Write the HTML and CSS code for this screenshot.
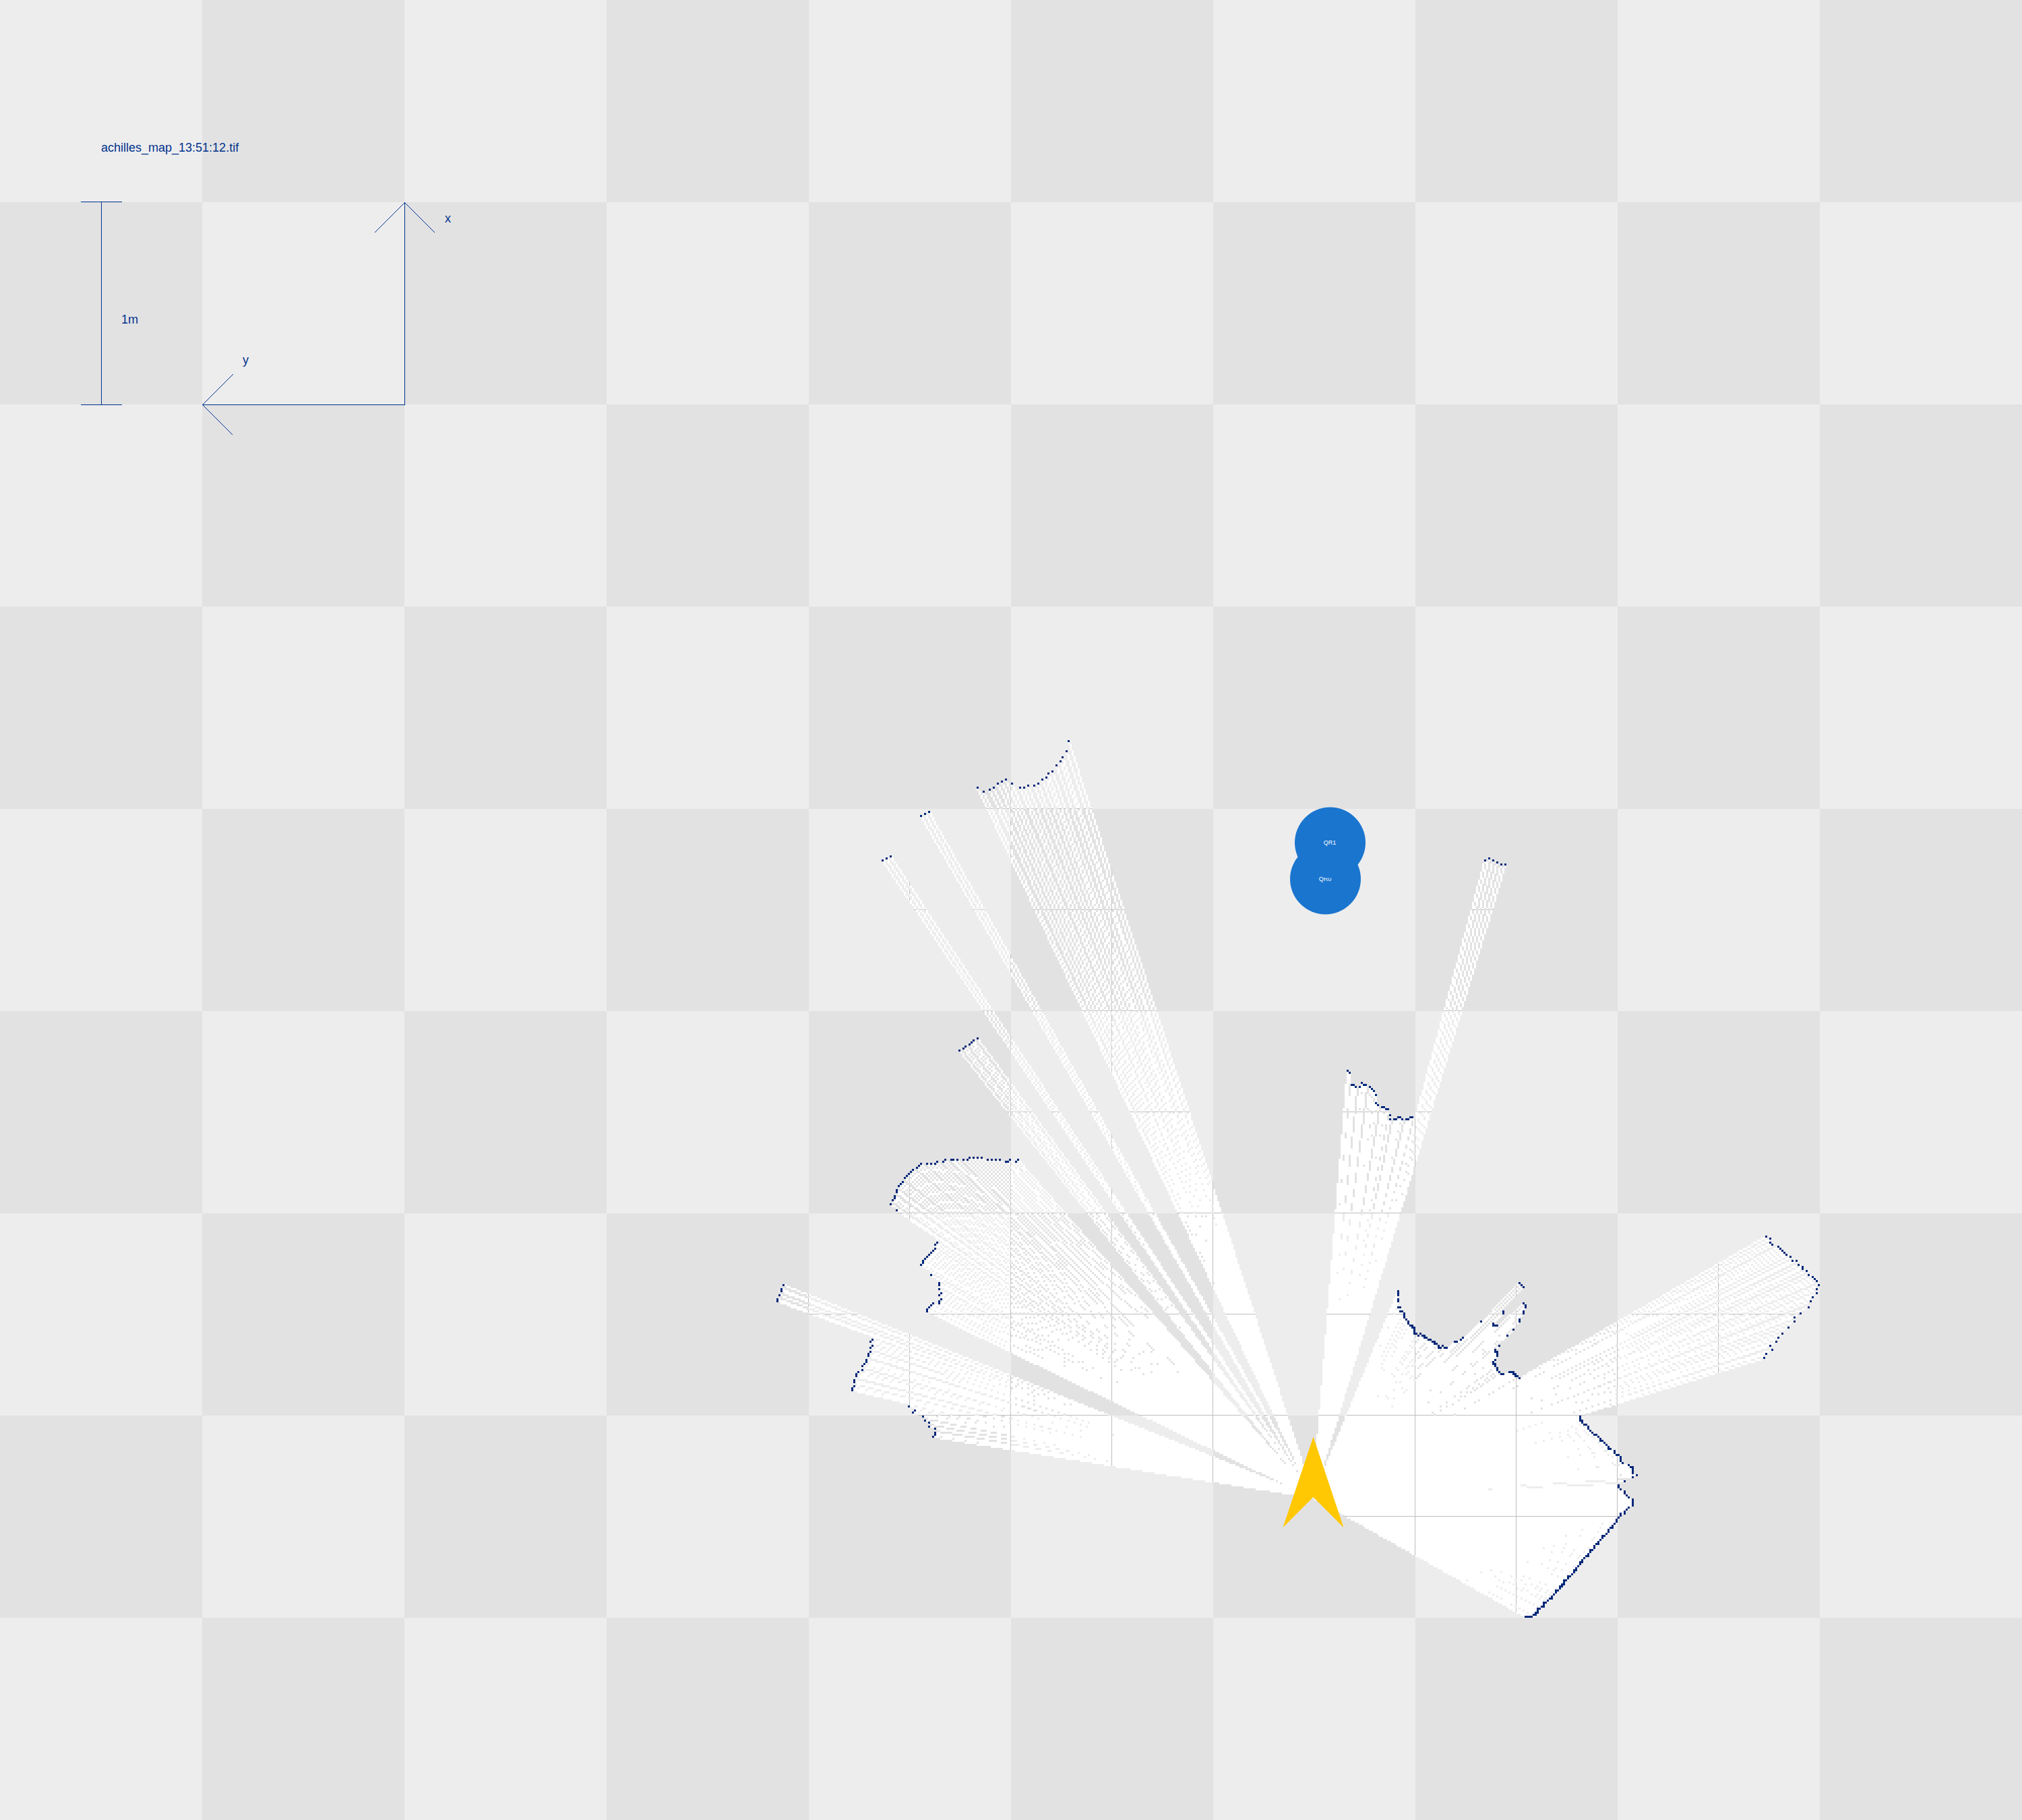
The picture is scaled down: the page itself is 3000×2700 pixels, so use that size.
FILE: index.html
```html
<!DOCTYPE html>
<html lang="en">
<head>
<meta charset="utf-8">
<title>achilles_map_13:51:12.tif</title>
<link rel="stylesheet" href="styles.css">
</head>
<body>
<main class="map">
<svg class="sheet" viewBox="0 0 3000 2700" role="img" aria-label="Occupancy grid map">
  <defs>
    <pattern id="checker" width="600" height="600" patternUnits="userSpaceOnUse">
      <rect class="tile-light" width="600" height="600"/>
      <path class="tile-dark" d="M300 0h300v300h-300zM0 300h300v300h-300z"/>
    </pattern>
  </defs>
  <rect class="crisp" width="3000" height="2700" fill="url(#checker)"/>

  <path id="free" class="free crisp"/>
  <path id="grid" class="grid crisp"/>
  <path id="walls" class="walls crisp"/>

  <g class="scale crisp">
    <path d="M120 299h61v1h-61zM120 600h61v1h-61zM150 300h1v300h-1z"/>
    <path d="M600 300h1v301h-1zM300 600h301v1h-301z"/>
  </g>
  <g class="heads crisp">
    <path d="M555.500 345.500L600.500 300.500L645.500 345.500"/>
    <path d="M345.500 555.500L300.500 600.500L345.500 645.500"/>
  </g>
  <g class="labels">
    <text x="150" y="225">achilles_map_13:51:12.tif</text>
    <text x="180" y="480">1m</text>
    <text x="660" y="330">x</text>
    <text x="360" y="540">y</text>
  </g>

  <g class="marker">
    <circle cx="1966.500" cy="1304" r="52.500"/>
    <text x="1966" y="1307">QR0</text>
  </g>
  <g class="marker">
    <circle cx="1973.500" cy="1250" r="52.500"/>
    <text x="1973" y="1253">QR1</text>
  </g>

  <path class="robot" d="M1948.500 2131.500L1993.500 2266L1948.500 2221L1903.500 2266Z"/>
</svg>
</main>
<script src="map.js"></script>
</body>
</html>
```
FILE: styles.css
```css
body {
  margin: 0;
  background: #ededee;
}

.map {
  display: grid;
}

.sheet {
  display: block;
  width: 100%;
  height: auto;
}

.crisp {
  shape-rendering: crispEdges;
}

.tile-light {
  fill: #ededee;
}

.tile-dark {
  fill: #e2e2e3;
}

.free {
  fill: #ffffff;
}

.grid {
  fill: #bebebf;
}

.walls {
  fill: #002878;
}

.scale {
  fill: #00328c;
}

.heads {
  fill: none;
  stroke: #00328c;
  stroke-width: 1px;
}

.labels {
  fill: #00328c;
  font: 18px "Liberation Sans", Arial, sans-serif;
}

.marker circle {
  fill: #1a75cf;
}

.marker text {
  fill: #ffffff;
  font: 9px "Liberation Sans", Arial, sans-serif;
  text-anchor: middle;
}

.robot {
  fill: #ffc803;
}
```
FILE: map.js
```js
// Cell size in drawing units, and the cell the laser scan starts from.
const CELL = 3;
const ORIGIN = [649, 740];

// Occupied cells, as column:row or column:first-last.
const HITS = `
528:366 527:371 525:374 524:376 522:378 520:381 518:382 517:384 515:385 513:387 511:388
508:388 506:389 504:389 500:387 497:385 495:386 493:387 491:389 489:390 486:391 483:389
459:401 457:402 455:403 440:423 438:424 436:425
483:513 481:514 480:515 479:516 477:517 476:518 474:519
503:573 502:574 499:573 498:574 497:574 494:573 492:573 490:573 488:573 485:572 483:572
481:572 479:572 478:573 476:573 473:573 471:573 470:573 467:573 466:574 463:574 462:575
460:575 458:575 455:575 454:576 453:577 451:578 450:579 449:580 448:581 447:582 446:584
445:585 444:586 443:588-589 442:591-592 441:593 440:595 443:598
463:614 462:615 462:617 461:618 460:619 459:620 458:621 457:622 456:623-624 455:625
460:630 464:634-635 464:637 465:639 464:640 465:642 464:643-644 461:644 460:645 459:646
458:647-648 387:635 386:637-638 385:640 384:642-643
431:662 430:663 431:665 430:666 430:668 429:669-670 428:672-673 427:674 426:675 426:677
424:678 423:679-680 422:682-683 422:685 421:686-687
449:695 452:697 451:698 456:700 457:702 459:703 459:705 462:706 462:708-709 461:710
734:425 736:424 738:425 740:426 742:427 744:427
666:529 667:530 668:536 669:536 670:537 672:537 673:535 674:536 675:536 677:537 678:538
679:539 680:541 680:545 681:546 683:547 684:547 685:548 686:548 687:551 687:553 689:553
690:553 691:552 692:552 693:553 695:553 696:553 697:552 698:552
691:638-640 691:642-643 691:646 692:646 692:648 693:648 694:649-651 695:652 696:653-654
697:655 698:655-656 699:656-659 700:659 701:660 702:659 703:660 704:660-661 705:661
706:662 707:662 708:663 709:663-664 710:664 711:665-666 712:666 713:665 714:666 715:666
719:663 720:663 722:662 723:661 732:653 743:648-649 738:654-655 739:655 740:655
751:634 752:635 753:636 753:644 754:645-646 753:648-649 751:652-653 748:657 745:660
741:665 739:667-668 740:668-670 739:672 738:673-674 739:674-675 740:676-677 741:678
742:679 743:679 746:678 747:678 748:678-679 749:679-680 750:680 751:681
873:611 875:612 875:614 876:615 879:616 880:617 881:618 882:619 883:620 885:621 886:623
888:623 889:625 891:626-627 893:628 894:630 896:631 897:632 898:633 899:635 898:637
898:639 896:641 895:643 894:646 890:649 887:651 887:653 884:656 881:659 879:661 878:663
875:665 876:667 873:669 872:671
781:700-702 782:702-703 783:704 784:704 785:705-706 786:707 787:708 788:709 789:709
790:710 791:711-712 792:712 793:713 794:714 795:715-716 796:716 798:717-718 799:719
800:719 801:720-722 802:723 805:724 806:725 807:725-728 809:729 807:730 803:732
800:734-735 801:736 803:737-738 804:739 805:740 807:741-744 805:745 804:746 803:747-748
801:748-749 800:750 799:751-752 798:753 797:754-755 796:755 795:756-757 794:758 793:759
792:759-760 791:761 790:762-763 789:763 788:764-765 787:766 786:766-767 785:768-769
784:769 783:770 782:771-772 781:772-773 780:774 779:775-776 778:776-777 777:778
776:779 775:779-780 774:781 773:781-783 772:783-784 771:784-785 770:786 769:786-787
768:788 767:789-790 766:790 765:791 764:792 763:792-794 762:794 761:795 760:795-797
759:797-798 758:798 757:799 756:799 755:799 754:799
`;

const hits = [];
for (const token of HITS.trim().split(/\s+/)) {
  const [column, rows] = token.split(":");
  const [first, last = first] = rows.split("-").map(Number);
  for (let y = first; y <= last; y++) hits.push([Number(column), y]);
}

const COLUMNS = 1000;
const key = (x, y) => y * COLUMNS + x;

// Every cell a laser beam crosses on its way to a hit is free.
const free = new Set();
for (const [endX, endY] of hits) {
  let [x, y] = ORIGIN;
  const dx = Math.abs(endX - x);
  const dy = Math.abs(endY - y);
  const stepX = Math.sign(endX - x);
  const stepY = Math.sign(endY - y);
  const steep = dy > dx;
  const long = Math.max(dx, dy);
  const short = Math.min(dx, dy);
  let error = long >> 1;
  for (let i = 0; i < long; i++) {
    free.add(key(x, y));
    error += short;
    const turn = error >= long;
    if (turn) error -= long;
    if (steep || turn) y += stepY;
    if (!steep || turn) x += stepX;
  }
}
for (const [x, y] of hits) free.delete(key(x, y));

const square = (x, y) => `M${x * CELL} ${y * CELL}h${CELL}v${CELL}h-${CELL}z`;

let freePath = "";
let gridPath = "";
for (const cell of [...free].sort((a, b) => a - b)) {
  const x = cell % COLUMNS;
  const y = (cell - x) / COLUMNS;
  // Neighbouring free cells of a row are joined into one rectangle.
  if (!free.has(cell - 1)) {
    let run = 1;
    while (free.has(cell + run)) run++;
    const width = run * CELL;
    freePath += `M${x * CELL} ${y * CELL}h${width}v${CELL}h-${width}z`;
  }
  // Half-metre grid lines show on free cells only.
  if (x % 50 === 49) gridPath += `M${x * CELL + 2} ${y * CELL}h1v${CELL}h-1z`;
  if (y % 50 === 49) gridPath += `M${x * CELL} ${y * CELL + 2}h${CELL}v1h-${CELL}z`;
}

document.getElementById("free").setAttribute("d", freePath);
document.getElementById("grid").setAttribute("d", gridPath);
document.getElementById("walls").setAttribute("d", hits.map(([x, y]) => square(x, y)).join(""));
```
